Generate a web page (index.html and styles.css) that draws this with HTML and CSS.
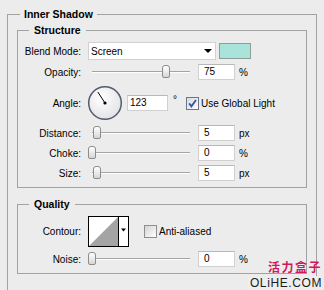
FILE: index.html
```html
<!DOCTYPE html>
<html lang="en">
<head>
    <meta charset="UTF-8">
    <title>Inner Shadow</title>
    <link rel="stylesheet" href="styles.css">
</head>
<body>
    <fieldset class="panel">
        <legend>Inner Shadow</legend>

        <fieldset class="group structure">
            <legend>Structure</legend>
            <div class="row row-blend">
                <span class="label">Blend Mode:</span>
                <div class="select"><span>Screen</span><i class="arrow"></i></div>
                <span class="swatch"></span>
            </div>
            <div class="row row-opacity">
                <span class="label">Opacity:</span>
                <div class="slider"><span class="thumb" style="left: 74px"></span></div>
                <span class="field">75</span>
                <span class="unit">%</span>
            </div>
            <div class="row row-angle">
                <span class="label">Angle:</span>
                <svg class="dial" width="36" height="36" viewBox="0 0 36 36">
                    <defs>
                        <radialGradient id="dialFill" cx="0.4" cy="0.35" r="0.7">
                            <stop offset="0" stop-color="#ffffff"/>
                            <stop offset="1" stop-color="#e2e2e6"/>
                        </radialGradient>
                    </defs>
                    <circle cx="18" cy="18" r="16.3" fill="url(#dialFill)" stroke="#535b6c" stroke-width="1.5"/>
                    <line x1="18" y1="18" x2="10.9" y2="7.1" stroke="#000" stroke-width="1"/>
                    <circle cx="18" cy="18" r="1.6" fill="#000"/>
                </svg>
                <span class="field field-angle">123</span>
                <span class="degree">°</span>
                <svg class="check" width="13" height="13" viewBox="0 0 13 13">
                    <defs>
                        <linearGradient id="boxFill" x1="0" y1="0" x2="1" y2="1">
                            <stop offset="0" stop-color="#d4d8de"/>
                            <stop offset="1" stop-color="#ffffff"/>
                        </linearGradient>
                    </defs>
                    <rect x="0.5" y="0.5" width="12" height="12" fill="url(#boxFill)" stroke="#6b7788"/>
                    <path d="M3.2 6.4 L5.4 9.4 L10 3" fill="none" stroke="#3a57a3" stroke-width="1.8"/>
                </svg>
                <span class="check-text">Use Global Light</span>
            </div>
            <div class="row">
                <span class="label">Distance:</span>
                <div class="slider"><span class="thumb" style="left: 5px"></span></div>
                <span class="field">5</span>
                <span class="unit">px</span>
            </div>
            <div class="row">
                <span class="label">Choke:</span>
                <div class="slider"><span class="thumb" style="left: 0px"></span></div>
                <span class="field">0</span>
                <span class="unit">%</span>
            </div>
            <div class="row">
                <span class="label">Size:</span>
                <div class="slider"><span class="thumb" style="left: 5px"></span></div>
                <span class="field">5</span>
                <span class="unit">px</span>
            </div>
        </fieldset>

        <fieldset class="group quality">
            <legend>Quality</legend>
            <div class="row row-contour">
                <span class="label">Contour:</span>
                <svg class="contour" width="41" height="31" viewBox="0 0 41 31">
                    <rect x="0.5" y="0.5" width="40" height="30" fill="#fff" stroke="#000"/>
                    <polygon points="1,30 30,1 30,30" fill="#a4a4a4"/>
                    <line x1="30.5" y1="0" x2="30.5" y2="31" stroke="#000"/>
                    <polygon points="33,12.5 38,12.5 35.5,15.5" fill="#000"/>
                </svg>
                <span class="box"></span>
                <span class="check-text">Anti-aliased</span>
            </div>
            <div class="row row-noise">
                <span class="label">Noise:</span>
                <div class="slider"><span class="thumb" style="left: 0px"></span></div>
                <span class="field">0</span>
                <span class="unit">%</span>
            </div>
        </fieldset>
    </fieldset>

    <div class="watermark">
        <div class="cn">活力盒子</div>
        <div class="en">OLiHE.COM</div>
    </div>
</body>
</html>
```

FILE: styles.css
```css
html,
body {
    margin: 0;
    padding: 0;
    overflow: hidden;
}

body {
    width: 324px;
    height: 290px;
    position: relative;
    background-color: #ececec;
    color: #000;
    font-family: "Liberation Sans", Arial, sans-serif;
    font-size: 10px;
}

fieldset {
    margin: 0;
    padding: 0;
    min-width: 0;
    border: 1px solid #a2a2a2;
}

legend {
    padding: 0 4px;
    font-size: 10.5px;
    font-weight: bold;
    line-height: 14px;
}

.panel {
    margin: 7px 7px 0;
    padding: 0 9px 40px;
}

.panel > legend {
    margin-left: 3px;
}

.group > legend {
    margin-left: 11px;
    padding: 0 5px;
}

.structure {
    margin-top: 2px;
    padding: 4px 0 4px;
}

.quality {
    margin-top: 9px;
    padding: 3px 0 3px;
}

.row {
    display: flex;
    align-items: center;
    height: 20px;
}

.row-opacity {
    height: 22px;
}

.row-angle {
    height: 40px;
}

.row-contour {
    height: 34px;
}

.row-noise {
    height: 22px;
}

.label {
    flex: none;
    width: 63px;
    margin-right: 7px;
    text-align: right;
}

.select {
    box-sizing: border-box;
    width: 128px;
    height: 18px;
    padding-left: 2px;
    display: flex;
    align-items: center;
    justify-content: space-between;
    background-color: #fff;
    border: 1px solid #d2d2d2;
}

.arrow {
    width: 0;
    height: 0;
    margin-right: 3px;
    border-left: 4px solid transparent;
    border-right: 4px solid transparent;
    border-top: 4px solid #000;
}

.swatch {
    box-sizing: border-box;
    width: 32px;
    height: 16px;
    margin-left: 3px;
    background-color: #a9e4da;
    border: 1px solid #8e9c9a;
}

.slider {
    position: relative;
    width: 106px;
    height: 14px;
}

.slider::before {
    content: "";
    position: absolute;
    left: 4px;
    right: 4px;
    top: 6px;
    height: 1px;
    background-color: #a4a4a4;
    border-bottom: 1px solid #fff;
}

.thumb {
    position: absolute;
    top: 0;
    box-sizing: border-box;
    width: 8px;
    height: 13px;
    background: linear-gradient(#ffffff, #d6d6d6);
    border: 1px solid #8c8c8c;
    border-radius: 3px 3px 2px 2px;
}

.field {
    box-sizing: border-box;
    width: 37px;
    height: 16px;
    margin-left: 4px;
    padding-left: 5px;
    line-height: 14px;
    background-color: #fff;
    border: 1px solid #d0d0d0;
    border-top-color: #b8b8b8;
}

.field-angle {
    width: 41px;
    padding-left: 2px;
}

.unit {
    margin-left: 4px;
}

.dial {
    margin-left: -1px;
}

.degree {
    align-self: flex-start;
    margin: 12px 0 0 5px;
    line-height: 10px;
}

.check {
    margin-left: 9px;
}

.check-text {
    margin-left: 2px;
}

.contour {
    flex: none;
}

.box {
    box-sizing: border-box;
    width: 13px;
    height: 13px;
    margin-left: 15px;
    background: linear-gradient(135deg, #d3d3d3, #ffffff);
    border: 1px solid #8d8e8e;
}

.watermark {
    position: absolute;
    right: 2px;
    top: 260px;
    text-align: right;
}

.watermark .cn {
    color: #d3175c;
    font-family: "Noto Sans CJK SC", sans-serif;
    font-size: 12px;
    font-weight: bold;
    letter-spacing: 1.5px;
    line-height: 14px;
}

.watermark .en {
    margin-top: 2px;
    padding-left: 2px;
    background-color: #eeeeee;
    color: #1c1c1c;
    font-size: 12px;
    letter-spacing: 0.6px;
    line-height: 14px;
}
```
